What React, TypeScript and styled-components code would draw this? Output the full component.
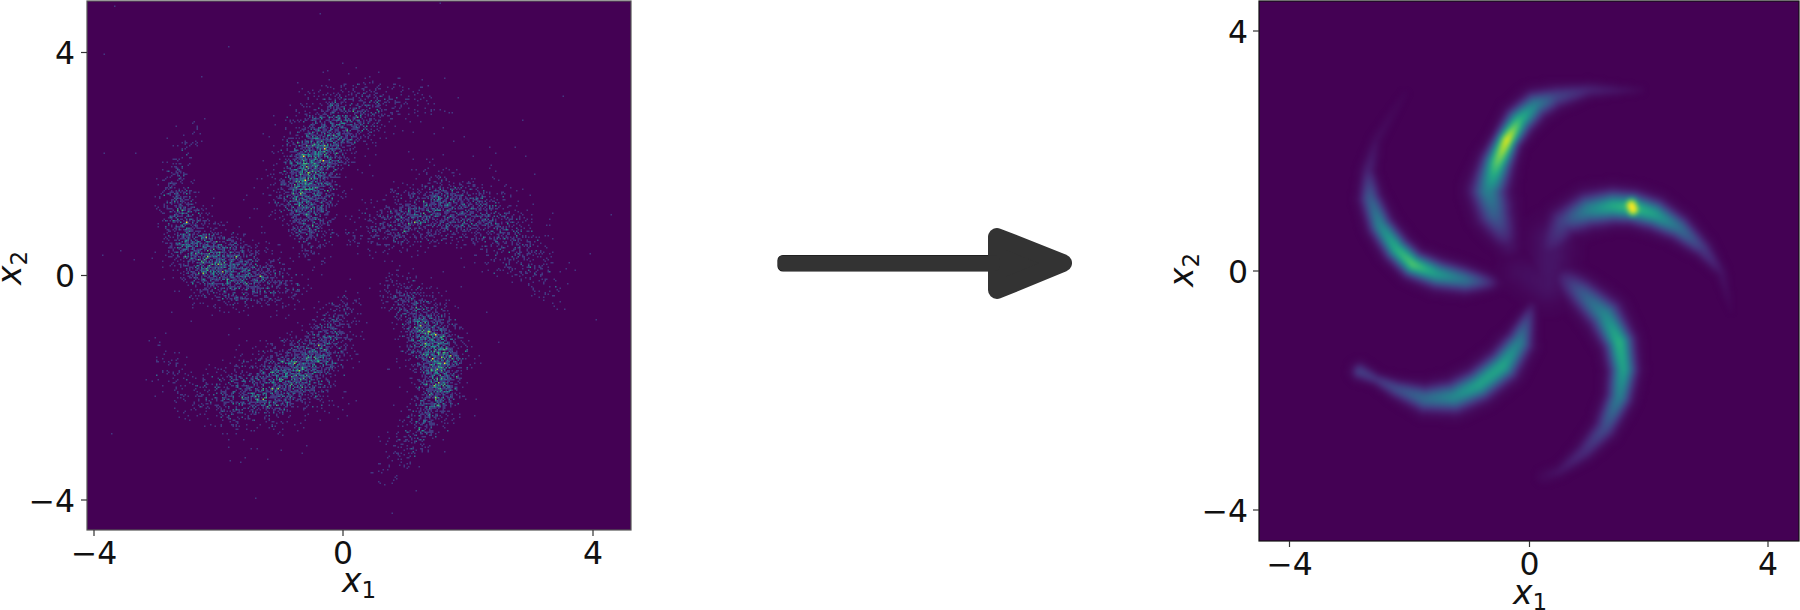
import React, { useMemo } from 'react';
import styled, { createGlobalStyle } from 'styled-components';

// one point of an arm's centre line: x, y, half width, peak value
type ArmPoint = [number, number, number, number];
type Arm = ArmPoint[];

type Layout = {
  frame: { left: number; top: number; right: number; bottom: number };
  xTicks: { at: number; label: string }[];
  yTicks: { at: number; label: string }[];
  tickRight: number;
  tickBase: number;
  xLabel: { x: number; y: number };
  yLabel: { x: number; y: number };
  frameColor: string;
};

const VIRIDIS = ['#440154', '#482475', '#414487', '#355f8d', '#2a788e', '#21918c', '#22a884', '#44bf70', '#7ad151', '#bddf26', '#fde725'];

const SCALE_X = 2.45;
const SCALE_Y = 2.57;

const scaleArms = (arms: Arm[]): Arm[] =>
  arms.map((arm) => arm.map(([x, y, w, v]): ArmPoint => [x / SCALE_X, y / SCALE_Y, w / 2.5, v]));

const SAMPLE_ARMS = scaleArms([
  [[765, 640, 40, 0.08], [750, 510, 52, 0.6], [765, 420, 52, 0.72], [800, 350, 60, 0.48], [860, 300, 58, 0.3], [930, 262, 50, 0.11], [1060, 262, 40, 0.02]],
  [[890, 600, 42, 0.08], [1000, 565, 50, 0.32], [1080, 530, 58, 0.4], [1160, 550, 60, 0.3], [1240, 600, 58, 0.2], [1310, 690, 48, 0.11], [1365, 800, 20, 0.025]],
  [[975, 745, 36, 0.14], [1040, 830, 46, 0.5], [1075, 920, 42, 0.8], [1075, 1000, 38, 0.55], [1050, 1070, 36, 0.3], [1010, 1130, 38, 0.13], [950, 1200, 34, 0.04]],
  [[840, 800, 34, 0.12], [800, 880, 46, 0.35], [740, 950, 58, 0.58], [660, 1000, 60, 0.42], [570, 1020, 62, 0.22], [480, 1010, 44, 0.08], [380, 920, 34, 0.025]],
  [[700, 745, 42, 0.12], [620, 720, 56, 0.38], [530, 680, 60, 0.58], [470, 620, 50, 0.5], [440, 540, 34, 0.35], [430, 470, 28, 0.2], [450, 390, 20, 0.09], [500, 300, 16, 0.02]],
]);

const MODEL_ARMS = scaleArms([
  [[855, 630, 26, 0.05], [820, 550, 36, 0.3], [805, 490, 36, 0.44], [825, 420, 30, 0.74], [850, 360, 24, 0.96], [880, 310, 28, 0.66], [920, 270, 28, 0.42], [970, 250, 24, 0.2], [1050, 232, 17, 0.09], [1180, 232, 9, 0.012]],
  [[945, 650, 30, 0.05], [990, 570, 32, 0.2], [1050, 540, 34, 0.44], [1110, 530, 32, 0.6], [1157, 533, 30, 0.68], [1210, 550, 30, 0.56], [1270, 585, 26, 0.36], [1330, 640, 20, 0.16], [1375, 700, 13, 0.045], [1400, 800, 7, 0.005]],
  [[1155, 528, 22, 1.08], [1159, 538, 22, 1.08]],
  [[975, 700, 26, 0.04], [1030, 750, 30, 0.26], [1090, 810, 34, 0.46], [1125, 880, 30, 0.63], [1135, 950, 28, 0.56], [1125, 1020, 26, 0.42], [1090, 1100, 24, 0.22], [1040, 1160, 20, 0.12], [980, 1210, 14, 0.05], [940, 1225, 16, 0.02]],
  [[910, 790, 14, 0.06], [880, 880, 28, 0.42], [840, 940, 32, 0.58], [780, 990, 32, 0.56], [720, 1020, 32, 0.46], [650, 1025, 28, 0.34], [580, 1000, 20, 0.22], [530, 975, 14, 0.14], [490, 955, 18, 0.18]],
  [[830, 728, 16, 0.02], [750, 720, 26, 0.36], [680, 705, 28, 0.53], [620, 680, 26, 0.72], [580, 640, 26, 0.62], [540, 580, 25, 0.45], [515, 510, 23, 0.28], [510, 440, 17, 0.09], [530, 360, 13, 0.03], [600, 240, 9, 0.006]],
  [[960, 620, 50, 0.06], [950, 730, 50, 0.05], [880, 700, 40, 0.03]],
]);

const LEFT_LAYOUT: Layout = {
  frame: { left: 87, top: 1, right: 631, bottom: 530 },
  xTicks: [{ at: 94, label: '\u22124' }, { at: 343, label: '0' }, { at: 593, label: '4' }],
  yTicks: [{ at: 52.5, label: '4' }, { at: 275.5, label: '0' }, { at: 500, label: '\u22124' }],
  tickRight: 75,
  tickBase: 564,
  xLabel: { x: 359, y: 592 },
  yLabel: { x: 21, y: 268 },
  frameColor: '#555',
};

const RIGHT_LAYOUT: Layout = {
  frame: { left: 99, top: 1, right: 639, bottom: 541 },
  xTicks: [{ at: 129.5, label: '\u22124' }, { at: 369.5, label: '0' }, { at: 608, label: '4' }],
  yTicks: [{ at: 31, label: '4' }, { at: 271, label: '0' }, { at: 510, label: '\u22124' }],
  tickRight: 88,
  tickBase: 575,
  xLabel: { x: 370, y: 604 },
  yLabel: { x: 33, y: 270 },
  frameColor: '#111',
};

const viridis = (value: number) => {
  const t = Math.min(1, Math.max(0, value)) * (VIRIDIS.length - 1);
  const i = Math.min(VIRIDIS.length - 2, Math.floor(t));
  const a = parseInt(VIRIDIS[i].slice(1), 16);
  const b = parseInt(VIRIDIS[i + 1].slice(1), 16);
  const mix = (shift: number) =>
    Math.round(((a >> shift) & 255) + (((b >> shift) & 255) - ((a >> shift) & 255)) * (t - i));
  return `rgb(${mix(16)},${mix(8)},${mix(0)})`;
};

// value of the strongest arm at a point
const density = (arms: Arm[], px: number, py: number, spread: number) => {
  let best = 0;
  for (const arm of arms) {
    let nearest = Infinity;
    let width = 1;
    let peak = 0;
    for (let i = 0; i < arm.length - 1; i++) {
      const [ax, ay, aw, av] = arm[i];
      const [bx, by, bw, bv] = arm[i + 1];
      const dx = bx - ax;
      const dy = by - ay;
      const t = Math.min(1, Math.max(0, ((px - ax) * dx + (py - ay) * dy) / (dx * dx + dy * dy)));
      const qx = ax + dx * t - px;
      const qy = ay + dy * t - py;
      const d = qx * qx + qy * qy;
      if (d < nearest) {
        nearest = d;
        width = aw + (bw - aw) * t;
        peak = av + (bv - av) * t;
      }
    }
    const sigma = width * spread;
    const value = peak * Math.exp(-nearest / (2 * sigma * sigma));
    if (value > best) best = value;
  }
  return best;
};

const seeded = (seed: number) => () => {
  seed = (seed + 0x6d2b79f5) | 0;
  let t = Math.imul(seed ^ (seed >>> 15), 1 | seed);
  t = (t + Math.imul(t ^ (t >>> 7), 61 | t)) ^ t;
  return ((t ^ (t >>> 14)) >>> 0) / 4294967296;
};

const poisson = (rate: number, random: () => number) => {
  const limit = Math.exp(-rate);
  let count = 0;
  let product = random();
  while (product > limit) {
    count++;
    product *= random();
  }
  return count;
};

// collect the cells of one colour level into one path
const toPaths = (layout: Layout, cell: number, level: (x: number, y: number) => number, levels: number) => {
  const { left, top, right, bottom } = layout.frame;
  const buckets: string[][] = Array.from({ length: levels + 1 }, () => []);
  for (let y = top; y < bottom; y += cell) {
    for (let x = left; x < right; x += cell) {
      const value = Math.min(levels, level(x + cell / 2, y + cell / 2));
      if (value > 0) buckets[value].push(`M${x} ${y}h${cell}v${cell}h-${cell}z`);
    }
  }
  return buckets
    .map((cells, value) => ({ d: cells.join(''), fill: viridis(value / levels) }))
    .filter((path) => path.d);
};

const useSamplePaths = () =>
  useMemo(() => {
    const random = seeded(2024);
    const level = (x: number, y: number) => {
      const core = density(SAMPLE_ARMS, x, y, 0.7) * 2.3;
      const halo = density(SAMPLE_ARMS, x, y, 1.5) * 0.05;
      return poisson(core + halo + 0.0002, random);
    };
    return toPaths(LEFT_LAYOUT, 1.5, level, 6);
  }, []);

const useModelPaths = () =>
  useMemo(() => {
    const level = (x: number, y: number) => Math.round(density(MODEL_ARMS, x, y, 0.68) * 200);
    return toPaths(RIGHT_LAYOUT, 2, level, 200);
  }, []);

const AxisLabel = ({ x, y, sub, vertical }: { x: number; y: number; sub: string; vertical?: boolean }) => (
  <LabelText x={x} y={y} transform={vertical ? `rotate(-90 ${x} ${y})` : undefined}>
    x<LabelSub dy={6}>{sub}</LabelSub>
  </LabelText>
);

const Plot = ({ id, layout, paths, blur }: { id: string; layout: Layout; paths: { d: string; fill: string }[]; blur: number }) => {
  const { left, top, right, bottom } = layout.frame;
  return (
    <PlotSvg viewBox="0 0 640 610" width={640} height={610}>
      <defs>
        <clipPath id={`${id}-clip`}>
          <rect x={left} y={top} width={right - left} height={bottom - top} />
        </clipPath>
        <filter id={`${id}-blur`} filterUnits="userSpaceOnUse" x={0} y={0} width={640} height={610} colorInterpolationFilters="sRGB">
          <feGaussianBlur stdDeviation={blur} />
        </filter>
      </defs>
      <rect x={left} y={top} width={right - left} height={bottom - top} fill="#440154" />
      <g clipPath={`url(#${id}-clip)`}>
        <g filter={`url(#${id}-blur)`}>
          {paths.map((path) => (
            <path key={path.fill} d={path.d} fill={path.fill} />
          ))}
        </g>
      </g>
      <rect x={left} y={top} width={right - left} height={bottom - top} fill="none" stroke={layout.frameColor} strokeWidth={1.2} />
      {layout.xTicks.map((tick) => (
        <g key={tick.at}>
          <line x1={tick.at} x2={tick.at} y1={bottom} y2={bottom + 6} stroke="#333" strokeWidth={1.2} />
          <TickText x={tick.at} y={layout.tickBase} textAnchor="middle">{tick.label}</TickText>
        </g>
      ))}
      {layout.yTicks.map((tick) => (
        <g key={tick.at}>
          <line x1={left - 6} x2={left} y1={tick.at} y2={tick.at} stroke="#333" strokeWidth={1.2} />
          <TickText x={layout.tickRight} y={tick.at + 11.5} textAnchor="end">{tick.label}</TickText>
        </g>
      ))}
      <AxisLabel x={layout.xLabel.x - 17} y={layout.xLabel.y} sub="1" />
      <AxisLabel x={layout.yLabel.x} y={layout.yLabel.y + 17} sub="2" vertical />
    </PlotSvg>
  );
};

const BigArrow = () => (
  <ArrowSvg viewBox="0 0 304 80" width={304} height={80}>
    <ArrowPart x={8} y={35.5} width={208} height={7.5} rx={1} $edge={1.2} />
    <ArrowHead points="223,13 223,66 289,39" />
    <ArrowPart x={8} y={35.5} width={214} height={7.5} rx={1} $edge={0} />
  </ArrowSvg>
);

const App = () => {
  const samplePaths = useSamplePaths();
  const modelPaths = useModelPaths();
  return (
    <>
      <GlobalStyle />
      <Page>
        <Plot id="samples" layout={LEFT_LAYOUT} paths={samplePaths} blur={0.45} />
        <BigArrow />
        <Plot id="model" layout={RIGHT_LAYOUT} paths={modelPaths} blur={2} />
      </Page>
    </>
  );
};

const GlobalStyle = createGlobalStyle`
  html, body {
    margin: 0;
    padding: 0;
    background: #fff;
  }
`;

const Page = styled.div`
  width: 1800px;
  height: 610px;
  overflow: hidden;
  display: grid;
  grid-template-columns: 640px 1fr 640px;
  align-items: start;
  background: #fff;
`;

const PlotSvg = styled.svg`
  display: block;
`;

const ArrowSvg = styled.svg`
  display: block;
  margin: 224px 0 0 134px;
`;

const ArrowPart = styled.rect<{ $edge: number }>`
  fill: #333;
  stroke: ${(props) => (props.$edge ? '#111' : '#333')};
  stroke-width: ${(props) => 8 + props.$edge}px;
  stroke-linejoin: round;
`;

const ArrowHead = styled.polygon`
  fill: #333;
  stroke: #333;
  stroke-width: 18px;
  stroke-linejoin: round;
`;

const TickText = styled.text`
  font-family: 'DejaVu Sans', sans-serif;
  font-size: 31.5px;
  fill: #111;
`;

const LabelText = styled.text`
  font-family: 'DejaVu Sans', sans-serif;
  font-size: 33px;
  font-style: italic;
  fill: #111;
`;

const LabelSub = styled.tspan`
  font-size: 23px;
  font-style: normal;
`;

export default App;
